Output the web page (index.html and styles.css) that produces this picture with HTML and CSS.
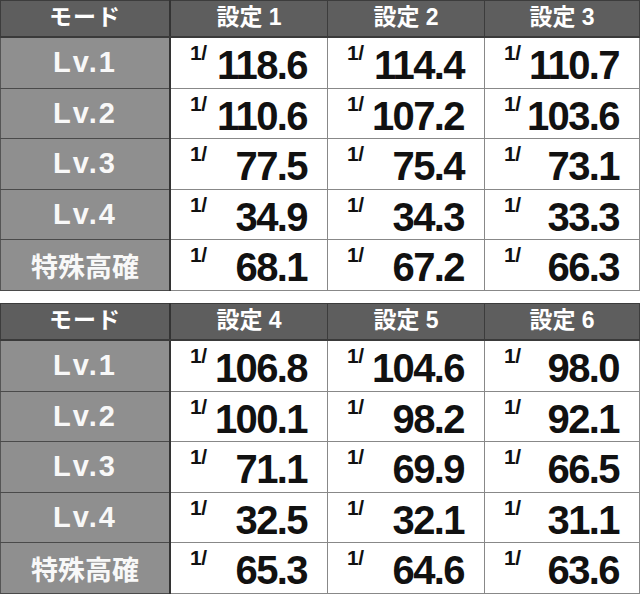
FILE: index.html
```html
<!DOCTYPE html>
<html lang="ja">
<head>
<meta charset="utf-8">
<link rel="stylesheet" href="styles.css">
</head>
<body>
<table class="tbl">
  <tr class="head"><th class="mode">モード</th><th>設定 1</th><th>設定 2</th><th>設定 3</th></tr>
  <tr><th class="lv">Lv.1</th><td><div class="cell"><span class="one">1/</span><span class="num">118.6</span></div></td><td><div class="cell"><span class="one">1/</span><span class="num">114.4</span></div></td><td><div class="cell"><span class="one">1/</span><span class="num">110.7</span></div></td></tr>
  <tr><th class="lv">Lv.2</th><td><div class="cell"><span class="one">1/</span><span class="num">110.6</span></div></td><td><div class="cell"><span class="one">1/</span><span class="num">107.2</span></div></td><td><div class="cell"><span class="one">1/</span><span class="num">103.6</span></div></td></tr>
  <tr><th class="lv">Lv.3</th><td><div class="cell"><span class="one">1/</span><span class="num">77.5</span></div></td><td><div class="cell"><span class="one">1/</span><span class="num">75.4</span></div></td><td><div class="cell"><span class="one">1/</span><span class="num">73.1</span></div></td></tr>
  <tr><th class="lv">Lv.4</th><td><div class="cell"><span class="one">1/</span><span class="num">34.9</span></div></td><td><div class="cell"><span class="one">1/</span><span class="num">34.3</span></div></td><td><div class="cell"><span class="one">1/</span><span class="num">33.3</span></div></td></tr>
  <tr><th class="lv jp">特殊高確</th><td><div class="cell"><span class="one">1/</span><span class="num">68.1</span></div></td><td><div class="cell"><span class="one">1/</span><span class="num">67.2</span></div></td><td><div class="cell"><span class="one">1/</span><span class="num">66.3</span></div></td></tr>
</table>
<table class="tbl second">
  <tr class="head"><th class="mode">モード</th><th>設定 4</th><th>設定 5</th><th>設定 6</th></tr>
  <tr><th class="lv">Lv.1</th><td><div class="cell"><span class="one">1/</span><span class="num">106.8</span></div></td><td><div class="cell"><span class="one">1/</span><span class="num">104.6</span></div></td><td><div class="cell"><span class="one">1/</span><span class="num">98.0</span></div></td></tr>
  <tr><th class="lv">Lv.2</th><td><div class="cell"><span class="one">1/</span><span class="num">100.1</span></div></td><td><div class="cell"><span class="one">1/</span><span class="num">98.2</span></div></td><td><div class="cell"><span class="one">1/</span><span class="num">92.1</span></div></td></tr>
  <tr><th class="lv">Lv.3</th><td><div class="cell"><span class="one">1/</span><span class="num">71.1</span></div></td><td><div class="cell"><span class="one">1/</span><span class="num">69.9</span></div></td><td><div class="cell"><span class="one">1/</span><span class="num">66.5</span></div></td></tr>
  <tr><th class="lv">Lv.4</th><td><div class="cell"><span class="one">1/</span><span class="num">32.5</span></div></td><td><div class="cell"><span class="one">1/</span><span class="num">32.1</span></div></td><td><div class="cell"><span class="one">1/</span><span class="num">31.1</span></div></td></tr>
  <tr><th class="lv jp">特殊高確</th><td><div class="cell"><span class="one">1/</span><span class="num">65.3</span></div></td><td><div class="cell"><span class="one">1/</span><span class="num">64.6</span></div></td><td><div class="cell"><span class="one">1/</span><span class="num">63.6</span></div></td></tr>
</table>
</body>
</html>
```

FILE: styles.css
```css
html, body {
  margin: 0;
  padding: 0;
  background: #fff;
}
body {
  font-family: "Liberation Sans", "Noto Sans CJK JP", sans-serif;
  width: 640px;
}
.tbl {
  width: 640px;
  border-collapse: collapse;
  table-layout: fixed;
  border: 1px solid #555;
}
.tbl.second {
  margin-top: 12px;
}
.tbl th, .tbl td {
  padding: 0;
}
.head th {
  height: 32px;
  padding-bottom: 3px;
  background: #5e5e5e;
  color: #fff;
  font-family: "Liberation Sans", "Noto Sans CJK JP", sans-serif;
  font-weight: bold;
  font-size: 23px;
  line-height: 26px;
  text-align: center;
  border: 1px solid #3c3c3c;
  border-bottom: 2px solid #3a3a3a;
}
.head th:first-child { width: 168px; }
.head th:nth-child(2), .head th:nth-child(3) { width: 156px; }
.head th.mode { border-right: 2px solid #333; letter-spacing: 1px; }
.lv {
  height: 49.6px;
  background: #8f8f8f;
  color: #f8f8f8;
  font-weight: bold;
  font-size: 29px;
  letter-spacing: 2px;
  text-align: center;
  border-bottom: 1px solid #4a4a4a;
  border-right: 2px solid #333;
}
.lv.jp {
  font-family: "Noto Sans CJK JP", sans-serif;
  font-size: 27px;
  letter-spacing: 0;
}
.tbl td {
  height: 49.6px;
  background: #fff;
  border: 1px solid #888;
  vertical-align: top;
}
.cell {
  display: flex;
  justify-content: space-between;
  align-items: flex-start;
  padding: 0 20px 0 19px;
}
.one {
  margin-top: 5px;
  font-size: 21px;
  line-height: 20px;
  font-weight: bold;
  color: #111;
  letter-spacing: -0.5px;
}
.num {
  margin-top: 5px;
  font-size: 40px;
  line-height: 44px;
  font-weight: bold;
  color: #111;
  letter-spacing: -1.6px;
}
```
